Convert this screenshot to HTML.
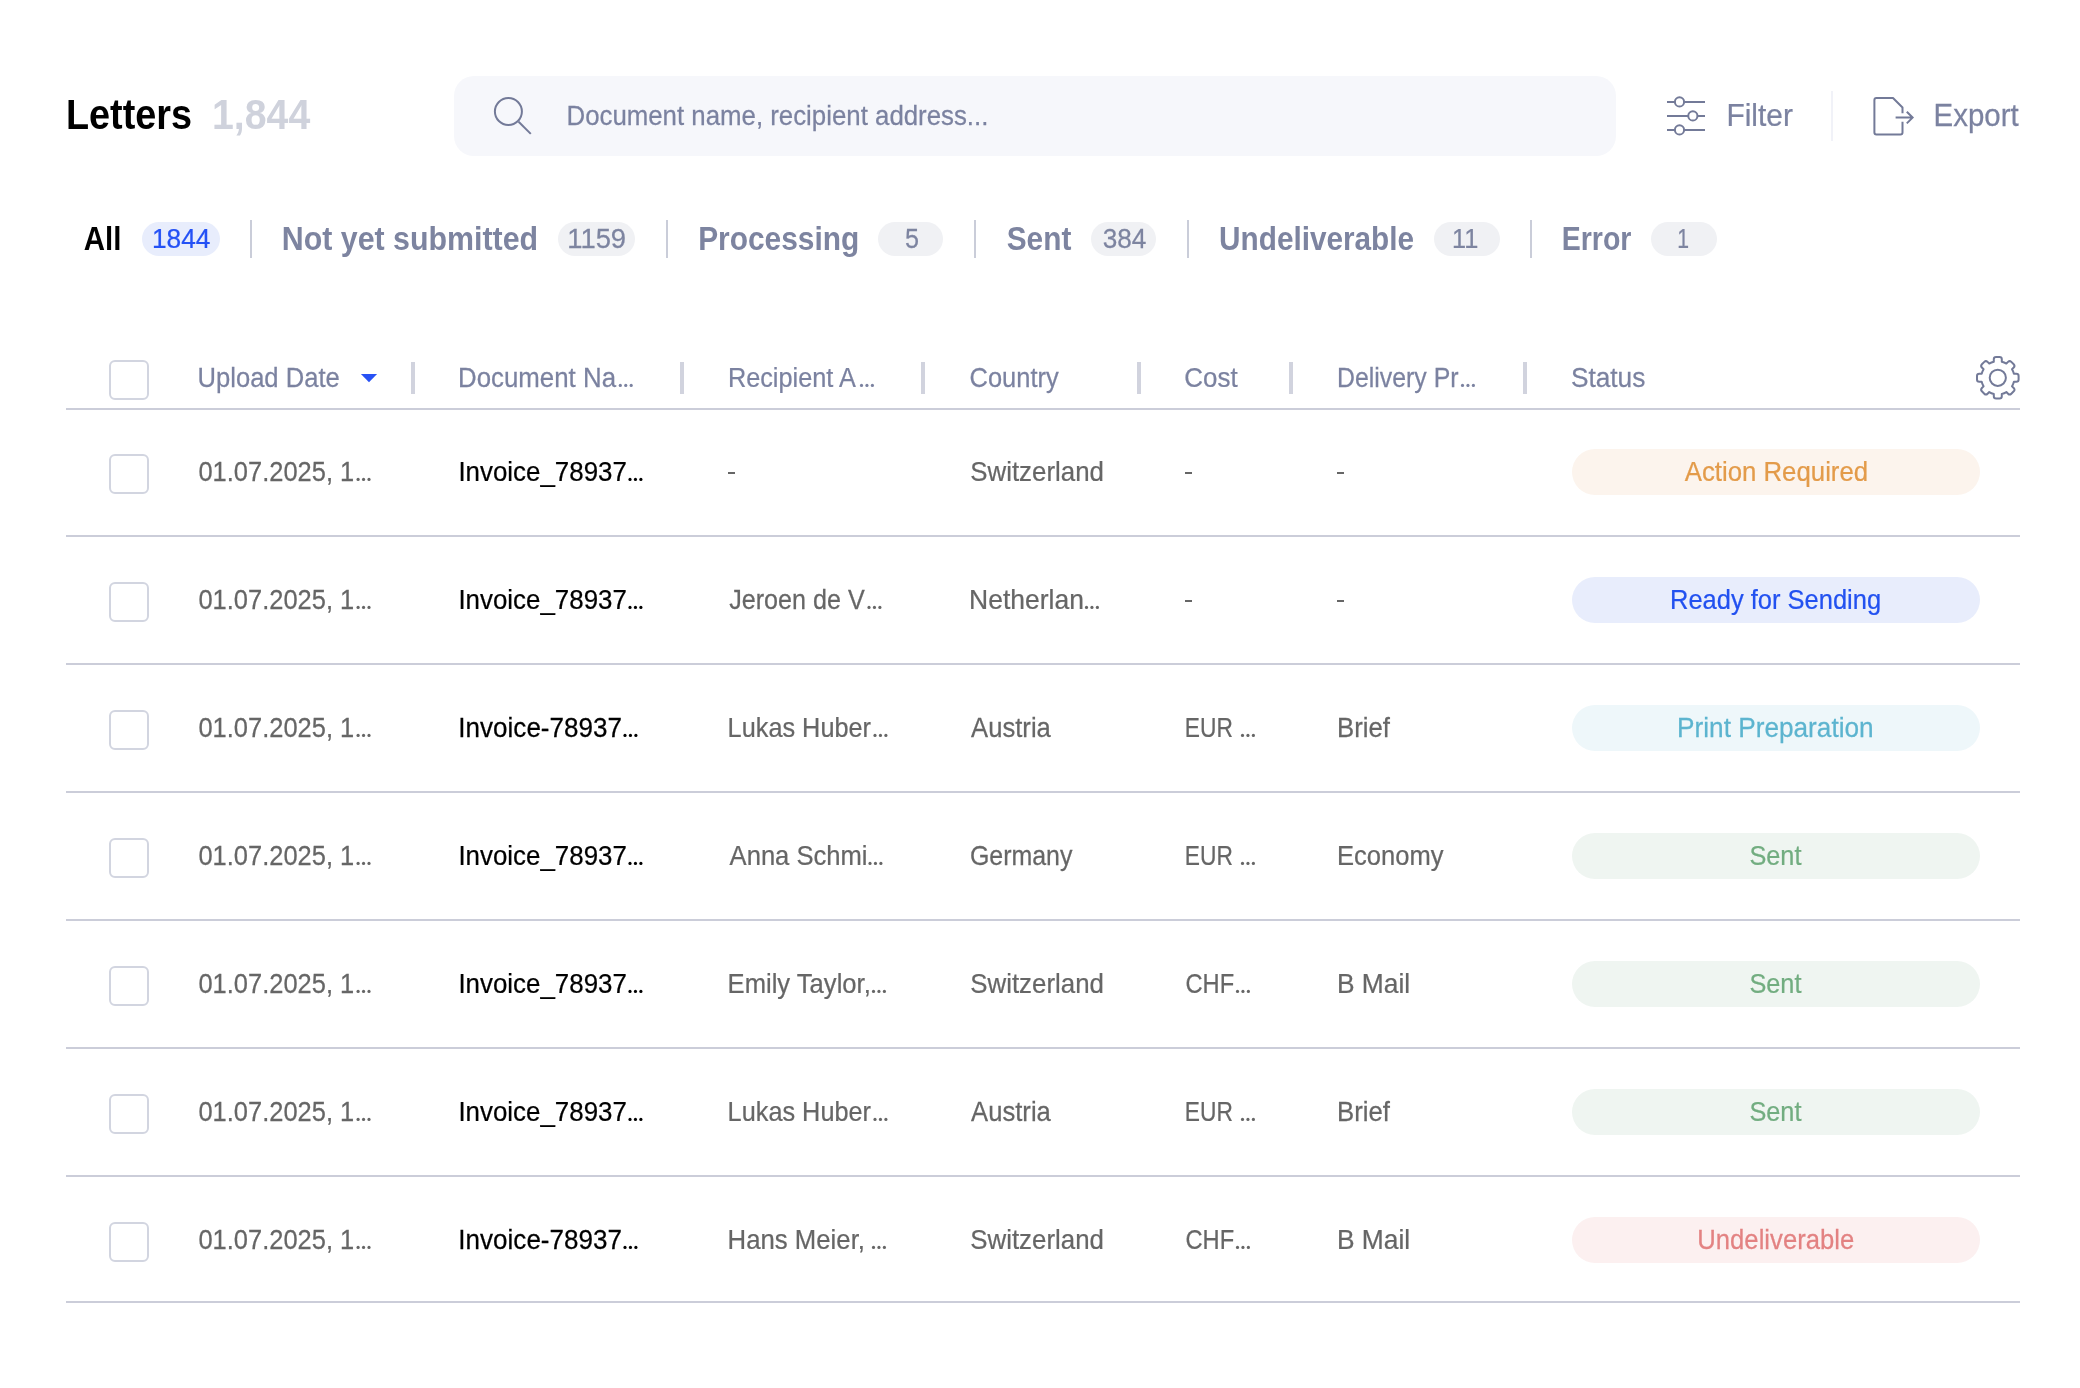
<!DOCTYPE html>
<html><head><meta charset="utf-8"><style>
html,body{margin:0;padding:0;background:#fff;width:2080px;height:1388px;overflow:hidden;position:relative}
.t{position:absolute;white-space:nowrap;font-family:"Liberation Sans",sans-serif;transform-origin:0 0}
.b{position:absolute}
.cb{position:absolute;width:36px;height:36px;border:2px solid #d2d5e0;border-radius:6px;background:#fff}
</style></head><body>
<div class="b" style="left:454px;top:76px;width:1162px;height:80px;border-radius:20px;background:#f6f7fb"></div>
<div class="b" style="left:1831px;top:91px;width:2px;height:50px;background:#f1f2f8"></div>
<div class="b" style="left:142px;top:222px;width:78.0px;height:34px;border-radius:17px;background:#e8edfc"></div>
<div class="b" style="left:558px;top:222px;width:77.4px;height:34px;border-radius:17px;background:#f0f1f4"></div>
<div class="b" style="left:878.2px;top:222px;width:65.3px;height:34px;border-radius:17px;background:#f0f1f4"></div>
<div class="b" style="left:1091.2px;top:222px;width:65.3px;height:34px;border-radius:17px;background:#f0f1f4"></div>
<div class="b" style="left:1434px;top:222px;width:66.0px;height:34px;border-radius:17px;background:#f0f1f4"></div>
<div class="b" style="left:1651px;top:222px;width:66.0px;height:34px;border-radius:17px;background:#f0f1f4"></div>
<div class="b" style="left:250px;top:220px;width:2px;height:38px;background:#cacdd9"></div>
<div class="b" style="left:666px;top:220px;width:2px;height:38px;background:#cacdd9"></div>
<div class="b" style="left:974px;top:220px;width:2px;height:38px;background:#cacdd9"></div>
<div class="b" style="left:1187px;top:220px;width:2px;height:38px;background:#cacdd9"></div>
<div class="b" style="left:1530px;top:220px;width:2px;height:38px;background:#cacdd9"></div>
<div class="b" style="left:411px;top:362px;width:4px;height:32px;background:#d1d3de"></div>
<div class="b" style="left:680px;top:362px;width:4px;height:32px;background:#d1d3de"></div>
<div class="b" style="left:921px;top:362px;width:4px;height:32px;background:#d1d3de"></div>
<div class="b" style="left:1137px;top:362px;width:4px;height:32px;background:#d1d3de"></div>
<div class="b" style="left:1289px;top:362px;width:4px;height:32px;background:#d1d3de"></div>
<div class="b" style="left:1523px;top:362px;width:4px;height:32px;background:#d1d3de"></div>
<div class="cb" style="left:109px;top:360px"></div>
<div class="b" style="left:66px;top:408px;width:1954px;height:2px;background:#cbcdd9"></div>
<svg class="b" style="left:0;top:0" width="2080" height="1388" viewBox="0 0 2080 1388"><path d="M360.9 374 L377.1 374 L369 382.3 Z" fill="#2852f5"/></svg>
<div class="b" style="left:728px;top:472px;width:7px;height:2px;background:#666"></div>
<div class="b" style="left:1185px;top:472px;width:7px;height:2px;background:#666"></div>
<div class="b" style="left:1337px;top:472px;width:7px;height:2px;background:#666"></div>
<div class="cb" style="left:109px;top:454px"></div>
<div class="b" style="left:66px;top:535px;width:1954px;height:2px;background:#cbcdd9"></div>
<div class="b" style="left:1572px;top:449px;width:408px;height:46px;border-radius:23px;background:#fcf4ed"></div>
<div class="b" style="left:1185px;top:600px;width:7px;height:2px;background:#666"></div>
<div class="b" style="left:1337px;top:600px;width:7px;height:2px;background:#666"></div>
<div class="cb" style="left:109px;top:582px"></div>
<div class="b" style="left:66px;top:663px;width:1954px;height:2px;background:#cbcdd9"></div>
<div class="b" style="left:1572px;top:577px;width:408px;height:46px;border-radius:23px;background:#e8edfc"></div>
<div class="cb" style="left:109px;top:710px"></div>
<div class="b" style="left:66px;top:791px;width:1954px;height:2px;background:#cbcdd9"></div>
<div class="b" style="left:1572px;top:705px;width:408px;height:46px;border-radius:23px;background:#eef7fa"></div>
<div class="cb" style="left:109px;top:838px"></div>
<div class="b" style="left:66px;top:919px;width:1954px;height:2px;background:#cbcdd9"></div>
<div class="b" style="left:1572px;top:833px;width:408px;height:46px;border-radius:23px;background:#eff5f1"></div>
<div class="cb" style="left:109px;top:966px"></div>
<div class="b" style="left:66px;top:1047px;width:1954px;height:2px;background:#cbcdd9"></div>
<div class="b" style="left:1572px;top:961px;width:408px;height:46px;border-radius:23px;background:#eff5f1"></div>
<div class="cb" style="left:109px;top:1094px"></div>
<div class="b" style="left:66px;top:1175px;width:1954px;height:2px;background:#cbcdd9"></div>
<div class="b" style="left:1572px;top:1089px;width:408px;height:46px;border-radius:23px;background:#eff5f1"></div>
<div class="cb" style="left:109px;top:1222px"></div>
<div class="b" style="left:66px;top:1301px;width:1954px;height:2px;background:#cbcdd9"></div>
<div class="b" style="left:1572px;top:1217px;width:408px;height:46px;border-radius:23px;background:#fcf0f0"></div>
<svg class="b" style="left:0;top:0" width="2080" height="1388" viewBox="0 0 2080 1388" fill="none" stroke="#737a98" stroke-width="2">
<circle cx="508.4" cy="111.5" r="13.5"/>
<path d="M518.6 121.7 L530.8 133.9" stroke-linecap="butt"/>
<path d="M1667 101.9 H1705 M1667 115.9 H1705 M1667 129.9 H1705"/>
<circle cx="1679.5" cy="101.9" r="4.6" fill="#fff"/>
<circle cx="1692.85" cy="115.9" r="4.6" fill="#fff"/>
<circle cx="1679.5" cy="129.9" r="4.6" fill="#fff"/>
<path d="M1902.5 113.3 V107.5 L1893 98 H1876.4 Q1874.4 98 1874.4 100 V132.5 Q1874.4 134.5 1876.4 134.5 H1900.5 Q1902.5 134.5 1902.5 132.5 V121.8" stroke-linejoin="round"/>
<path d="M1895.6 117.6 H1912.2 M1906.8 111.8 L1912.6 117.6 L1906.8 123.4"/>
<path d="M1993.80 361.69 L1993.80 359.30 Q1993.80 357.00 1996.10 357.00 L1999.50 357.00 Q2001.80 357.00 2001.80 359.30 L2001.80 361.69 A16.60 16.60 0 0 1 2006.36 363.58 L2008.05 361.89 Q2009.68 360.26 2011.31 361.89 L2013.71 364.29 Q2015.34 365.92 2013.71 367.55 L2012.02 369.24 A16.60 16.60 0 0 1 2013.91 373.80 L2016.30 373.80 Q2018.60 373.80 2018.60 376.10 L2018.60 379.50 Q2018.60 381.80 2016.30 381.80 L2013.91 381.80 A16.60 16.60 0 0 1 2012.02 386.36 L2013.71 388.05 Q2015.34 389.68 2013.71 391.31 L2011.31 393.71 Q2009.68 395.34 2008.05 393.71 L2006.36 392.02 A16.60 16.60 0 0 1 2001.80 393.91 L2001.80 396.30 Q2001.80 398.60 1999.50 398.60 L1996.10 398.60 Q1993.80 398.60 1993.80 396.30 L1993.80 393.91 A16.60 16.60 0 0 1 1989.24 392.02 L1987.55 393.71 Q1985.92 395.34 1984.29 393.71 L1981.89 391.31 Q1980.26 389.68 1981.89 388.05 L1983.58 386.36 A16.60 16.60 0 0 1 1981.69 381.80 L1979.30 381.80 Q1977.00 381.80 1977.00 379.50 L1977.00 376.10 Q1977.00 373.80 1979.30 373.80 L1981.69 373.80 A16.60 16.60 0 0 1 1983.58 369.24 L1981.89 367.55 Q1980.26 365.92 1981.89 364.29 L1984.29 361.89 Q1985.92 360.26 1987.55 361.89 L1989.24 363.58 A16.60 16.60 0 0 1 1993.80 361.69 Z" stroke-linejoin="round"/>
<circle cx="1997.8" cy="377.8" r="8.1"/>
</svg>
<svg class="b" style="left:0;top:0;will-change:transform" width="2080" height="1388" viewBox="0 0 2080 1388" font-family="Liberation Sans" xml:space="preserve">
<text transform="translate(66.04 129) scale(0.8964 1)" font-size="42.15" font-weight="700" fill="#000000">Letters</text>
<text transform="translate(212.05 129) scale(0.9310 1)" font-size="42.15" font-weight="700" fill="#cfd2dc">1,844</text>
<text transform="translate(566.48 125) scale(0.9257 1)" font-size="27.91" font-weight="400" fill="#7b82a0" stroke="#7b82a0" stroke-width="0.25">Document name, recipient address...</text>
<text transform="translate(1726.41 126) scale(0.9399 1)" font-size="31.83" font-weight="400" fill="#7b82a0" stroke="#7b82a0" stroke-width="0.25">Filter</text>
<text transform="translate(1933.6 126) scale(0.9261 1)" font-size="31.83" font-weight="400" fill="#7b82a0" stroke="#7b82a0" stroke-width="0.25">Export</text>
<text transform="translate(83.84 250) scale(0.8725 1)" font-size="33.72" font-weight="700" fill="#000000">All</text>
<text transform="translate(151.96 248) scale(0.9472 1)" font-size="27.76" font-weight="400" fill="#2451f5" stroke="#2451f5" stroke-width="0.25">1844</text>
<text transform="translate(281.8 250) scale(0.9002 1)" font-size="33.72" font-weight="700" fill="#7d84a0">Not yet submitted</text>
<text transform="translate(567.19 248) scale(0.9870 1)" font-size="27.76" font-weight="400" fill="#7d84a0" stroke="#7d84a0" stroke-width="0.25">1159</text>
<text transform="translate(698.13 250) scale(0.8866 1)" font-size="33.72" font-weight="700" fill="#7d84a0">Processing</text>
<text transform="translate(905.11 248) scale(0.9072 1)" font-size="27.76" font-weight="400" fill="#7d84a0" stroke="#7d84a0" stroke-width="0.25">5</text>
<text transform="translate(1006.73 250) scale(0.8842 1)" font-size="33.72" font-weight="700" fill="#7d84a0">Sent</text>
<text transform="translate(1102.68 248) scale(0.9428 1)" font-size="27.76" font-weight="400" fill="#7d84a0" stroke="#7d84a0" stroke-width="0.25">384</text>
<text transform="translate(1219.11 250) scale(0.8819 1)" font-size="33.72" font-weight="700" fill="#7d84a0">Undeliverable</text>
<text transform="translate(1452.12 248) scale(0.9130 1)" font-size="27.76" font-weight="400" fill="#7d84a0" stroke="#7d84a0" stroke-width="0.25">11</text>
<text transform="translate(1561.72 250) scale(0.8451 1)" font-size="33.72" font-weight="700" fill="#7d84a0">Error</text>
<text transform="translate(1677.28 248) scale(0.7631 1)" font-size="27.76" font-weight="400" fill="#7d84a0" stroke="#7d84a0" stroke-width="0.25">1</text>
<text transform="translate(197.5 387) scale(0.9127 1)" font-size="28.05" font-weight="400" fill="#7b82a0" stroke="#7b82a0" stroke-width="0.25">Upload Date</text>
<text transform="translate(457.98 387) scale(0.9216 1)" font-size="28.05" font-weight="400" fill="#7b82a0" stroke="#7b82a0" stroke-width="0.25">Document Na</text>
<text transform="translate(727.92 387) scale(0.9017 1)" font-size="28.05" font-weight="400" fill="#7b82a0" stroke="#7b82a0" stroke-width="0.25">Recipient A</text>
<text transform="translate(969.61 387) scale(0.9070 1)" font-size="28.05" font-weight="400" fill="#7b82a0" stroke="#7b82a0" stroke-width="0.25">Country</text>
<text transform="translate(1184.28 387) scale(0.9245 1)" font-size="28.05" font-weight="400" fill="#7b82a0" stroke="#7b82a0" stroke-width="0.25">Cost</text>
<text transform="translate(1336.96 387) scale(0.8862 1)" font-size="28.05" font-weight="400" fill="#7b82a0" stroke="#7b82a0" stroke-width="0.25">Delivery Pr</text>
<text transform="translate(1570.88 387) scale(0.9373 1)" font-size="28.05" font-weight="400" fill="#7b82a0" stroke="#7b82a0" stroke-width="0.25">Status</text>
<text transform="translate(198.4 481) scale(0.9129 1)" font-size="27.91" font-weight="400" fill="#666666" stroke="#666666" stroke-width="0.25">01.07.2025, 1</text>
<text transform="translate(458.38 481) scale(0.9285 1)" font-size="27.91" font-weight="400" fill="#000000" stroke="#000000" stroke-width="0.25">Invoice_78937</text>
<text transform="translate(970.29 481) scale(0.9266 1)" font-size="27.91" font-weight="400" fill="#666666" stroke="#666666" stroke-width="0.25">Switzerland</text>
<text transform="translate(1684.7 481) scale(0.9055 1)" font-size="28.49" font-weight="400" fill="#e39b4a" stroke="#e39b4a" stroke-width="0.25">Action Required</text>
<text transform="translate(198.4 609) scale(0.9129 1)" font-size="27.91" font-weight="400" fill="#666666" stroke="#666666" stroke-width="0.25">01.07.2025, 1</text>
<text transform="translate(458.38 609) scale(0.9285 1)" font-size="27.91" font-weight="400" fill="#000000" stroke="#000000" stroke-width="0.25">Invoice_78937</text>
<text transform="translate(729.21 609) scale(0.9008 1)" font-size="27.91" font-weight="400" fill="#666666" stroke="#666666" stroke-width="0.25">Jeroen de V</text>
<text transform="translate(969.03 609) scale(0.9492 1)" font-size="27.91" font-weight="400" fill="#666666" stroke="#666666" stroke-width="0.25">Netherlan</text>
<text transform="translate(1670.01 609) scale(0.8951 1)" font-size="28.49" font-weight="400" fill="#2251f0" stroke="#2251f0" stroke-width="0.25">Ready for Sending</text>
<text transform="translate(198.4 737) scale(0.9129 1)" font-size="27.91" font-weight="400" fill="#666666" stroke="#666666" stroke-width="0.25">01.07.2025, 1</text>
<text transform="translate(458.37 737) scale(0.9331 1)" font-size="27.91" font-weight="400" fill="#000000" stroke="#000000" stroke-width="0.25">Invoice-78937</text>
<text transform="translate(727.62 737) scale(0.9063 1)" font-size="27.91" font-weight="400" fill="#666666" stroke="#666666" stroke-width="0.25">Lukas Huber</text>
<text transform="translate(971.1 737) scale(0.9180 1)" font-size="27.91" font-weight="400" fill="#666666" stroke="#666666" stroke-width="0.25">Austria</text>
<text transform="translate(1184.82 737) scale(0.8158 1)" font-size="27.91" font-weight="400" fill="#666666" stroke="#666666" stroke-width="0.25">EUR</text>
<text transform="translate(1336.99 737) scale(0.9223 1)" font-size="27.91" font-weight="400" fill="#666666" stroke="#666666" stroke-width="0.25">Brief</text>
<text transform="translate(1677.05 737) scale(0.9202 1)" font-size="28.49" font-weight="400" fill="#5cb4cf" stroke="#5cb4cf" stroke-width="0.25">Print Preparation</text>
<text transform="translate(198.4 865) scale(0.9129 1)" font-size="27.91" font-weight="400" fill="#666666" stroke="#666666" stroke-width="0.25">01.07.2025, 1</text>
<text transform="translate(458.38 865) scale(0.9285 1)" font-size="27.91" font-weight="400" fill="#000000" stroke="#000000" stroke-width="0.25">Invoice_78937</text>
<text transform="translate(729.6 865) scale(0.9171 1)" font-size="27.91" font-weight="400" fill="#666666" stroke="#666666" stroke-width="0.25">Anna Schmi</text>
<text transform="translate(969.93 865) scale(0.8937 1)" font-size="27.91" font-weight="400" fill="#666666" stroke="#666666" stroke-width="0.25">Germany</text>
<text transform="translate(1184.82 865) scale(0.8158 1)" font-size="27.91" font-weight="400" fill="#666666" stroke="#666666" stroke-width="0.25">EUR</text>
<text transform="translate(1337 865) scale(0.9155 1)" font-size="27.91" font-weight="400" fill="#666666" stroke="#666666" stroke-width="0.25">Economy</text>
<text transform="translate(1749.41 865) scale(0.8891 1)" font-size="28.49" font-weight="400" fill="#72ad80" stroke="#72ad80" stroke-width="0.25">Sent</text>
<text transform="translate(198.4 993) scale(0.9129 1)" font-size="27.91" font-weight="400" fill="#666666" stroke="#666666" stroke-width="0.25">01.07.2025, 1</text>
<text transform="translate(458.38 993) scale(0.9285 1)" font-size="27.91" font-weight="400" fill="#000000" stroke="#000000" stroke-width="0.25">Invoice_78937</text>
<text transform="translate(727.6 993) scale(0.9176 1)" font-size="27.91" font-weight="400" fill="#666666" stroke="#666666" stroke-width="0.25">Emily Taylor,</text>
<text transform="translate(970.29 993) scale(0.9266 1)" font-size="27.91" font-weight="400" fill="#666666" stroke="#666666" stroke-width="0.25">Switzerland</text>
<text transform="translate(1185.49 993) scale(0.8488 1)" font-size="27.91" font-weight="400" fill="#666666" stroke="#666666" stroke-width="0.25">CHF</text>
<text transform="translate(1336.94 993) scale(0.9454 1)" font-size="27.91" font-weight="400" fill="#666666" stroke="#666666" stroke-width="0.25">B Mail</text>
<text transform="translate(1749.41 993) scale(0.8891 1)" font-size="28.49" font-weight="400" fill="#72ad80" stroke="#72ad80" stroke-width="0.25">Sent</text>
<text transform="translate(198.4 1121) scale(0.9129 1)" font-size="27.91" font-weight="400" fill="#666666" stroke="#666666" stroke-width="0.25">01.07.2025, 1</text>
<text transform="translate(458.38 1121) scale(0.9285 1)" font-size="27.91" font-weight="400" fill="#000000" stroke="#000000" stroke-width="0.25">Invoice_78937</text>
<text transform="translate(727.62 1121) scale(0.9063 1)" font-size="27.91" font-weight="400" fill="#666666" stroke="#666666" stroke-width="0.25">Lukas Huber</text>
<text transform="translate(971.1 1121) scale(0.9180 1)" font-size="27.91" font-weight="400" fill="#666666" stroke="#666666" stroke-width="0.25">Austria</text>
<text transform="translate(1184.82 1121) scale(0.8158 1)" font-size="27.91" font-weight="400" fill="#666666" stroke="#666666" stroke-width="0.25">EUR</text>
<text transform="translate(1336.99 1121) scale(0.9223 1)" font-size="27.91" font-weight="400" fill="#666666" stroke="#666666" stroke-width="0.25">Brief</text>
<text transform="translate(1749.41 1121) scale(0.8891 1)" font-size="28.49" font-weight="400" fill="#72ad80" stroke="#72ad80" stroke-width="0.25">Sent</text>
<text transform="translate(198.4 1249) scale(0.9129 1)" font-size="27.91" font-weight="400" fill="#666666" stroke="#666666" stroke-width="0.25">01.07.2025, 1</text>
<text transform="translate(458.37 1249) scale(0.9331 1)" font-size="27.91" font-weight="400" fill="#000000" stroke="#000000" stroke-width="0.25">Invoice-78937</text>
<text transform="translate(727.59 1249) scale(0.9230 1)" font-size="27.91" font-weight="400" fill="#666666" stroke="#666666" stroke-width="0.25">Hans Meier,</text>
<text transform="translate(970.29 1249) scale(0.9266 1)" font-size="27.91" font-weight="400" fill="#666666" stroke="#666666" stroke-width="0.25">Switzerland</text>
<text transform="translate(1185.49 1249) scale(0.8488 1)" font-size="27.91" font-weight="400" fill="#666666" stroke="#666666" stroke-width="0.25">CHF</text>
<text transform="translate(1336.94 1249) scale(0.9454 1)" font-size="27.91" font-weight="400" fill="#666666" stroke="#666666" stroke-width="0.25">B Mail</text>
<text transform="translate(1697.3 1249) scale(0.9009 1)" font-size="28.49" font-weight="400" fill="#e38282" stroke="#e38282" stroke-width="0.25">Undeliverable</text>
<circle cx="620.30" cy="385.40" r="1.6" fill="#7b82a0"/>
<circle cx="625.75" cy="385.40" r="1.6" fill="#7b82a0"/>
<circle cx="631.20" cy="385.40" r="1.6" fill="#7b82a0"/>
<circle cx="861.50" cy="385.40" r="1.6" fill="#7b82a0"/>
<circle cx="866.95" cy="385.40" r="1.6" fill="#7b82a0"/>
<circle cx="872.40" cy="385.40" r="1.6" fill="#7b82a0"/>
<circle cx="1462.50" cy="385.40" r="1.6" fill="#7b82a0"/>
<circle cx="1467.95" cy="385.40" r="1.6" fill="#7b82a0"/>
<circle cx="1473.40" cy="385.40" r="1.6" fill="#7b82a0"/>
<circle cx="358.10" cy="479.40" r="1.6" fill="#666666"/>
<circle cx="363.55" cy="479.40" r="1.6" fill="#666666"/>
<circle cx="369.00" cy="479.40" r="1.6" fill="#666666"/>
<circle cx="630.00" cy="479.40" r="1.6" fill="#000000"/>
<circle cx="635.45" cy="479.40" r="1.6" fill="#000000"/>
<circle cx="640.90" cy="479.40" r="1.6" fill="#000000"/>
<circle cx="358.10" cy="607.40" r="1.6" fill="#666666"/>
<circle cx="363.55" cy="607.40" r="1.6" fill="#666666"/>
<circle cx="369.00" cy="607.40" r="1.6" fill="#666666"/>
<circle cx="630.00" cy="607.40" r="1.6" fill="#000000"/>
<circle cx="635.45" cy="607.40" r="1.6" fill="#000000"/>
<circle cx="640.90" cy="607.40" r="1.6" fill="#000000"/>
<circle cx="869.00" cy="607.40" r="1.6" fill="#666666"/>
<circle cx="874.45" cy="607.40" r="1.6" fill="#666666"/>
<circle cx="879.90" cy="607.40" r="1.6" fill="#666666"/>
<circle cx="1086.50" cy="607.40" r="1.6" fill="#666666"/>
<circle cx="1091.95" cy="607.40" r="1.6" fill="#666666"/>
<circle cx="1097.40" cy="607.40" r="1.6" fill="#666666"/>
<circle cx="358.10" cy="735.40" r="1.6" fill="#666666"/>
<circle cx="363.55" cy="735.40" r="1.6" fill="#666666"/>
<circle cx="369.00" cy="735.40" r="1.6" fill="#666666"/>
<circle cx="625.00" cy="735.40" r="1.6" fill="#000000"/>
<circle cx="630.45" cy="735.40" r="1.6" fill="#000000"/>
<circle cx="635.90" cy="735.40" r="1.6" fill="#000000"/>
<circle cx="875.00" cy="735.40" r="1.6" fill="#666666"/>
<circle cx="880.45" cy="735.40" r="1.6" fill="#666666"/>
<circle cx="885.90" cy="735.40" r="1.6" fill="#666666"/>
<circle cx="1242.50" cy="735.40" r="1.6" fill="#666666"/>
<circle cx="1247.95" cy="735.40" r="1.6" fill="#666666"/>
<circle cx="1253.40" cy="735.40" r="1.6" fill="#666666"/>
<circle cx="358.10" cy="863.40" r="1.6" fill="#666666"/>
<circle cx="363.55" cy="863.40" r="1.6" fill="#666666"/>
<circle cx="369.00" cy="863.40" r="1.6" fill="#666666"/>
<circle cx="630.00" cy="863.40" r="1.6" fill="#000000"/>
<circle cx="635.45" cy="863.40" r="1.6" fill="#000000"/>
<circle cx="640.90" cy="863.40" r="1.6" fill="#000000"/>
<circle cx="870.00" cy="863.40" r="1.6" fill="#666666"/>
<circle cx="875.45" cy="863.40" r="1.6" fill="#666666"/>
<circle cx="880.90" cy="863.40" r="1.6" fill="#666666"/>
<circle cx="1242.50" cy="863.40" r="1.6" fill="#666666"/>
<circle cx="1247.95" cy="863.40" r="1.6" fill="#666666"/>
<circle cx="1253.40" cy="863.40" r="1.6" fill="#666666"/>
<circle cx="358.10" cy="991.40" r="1.6" fill="#666666"/>
<circle cx="363.55" cy="991.40" r="1.6" fill="#666666"/>
<circle cx="369.00" cy="991.40" r="1.6" fill="#666666"/>
<circle cx="630.00" cy="991.40" r="1.6" fill="#000000"/>
<circle cx="635.45" cy="991.40" r="1.6" fill="#000000"/>
<circle cx="640.90" cy="991.40" r="1.6" fill="#000000"/>
<circle cx="873.50" cy="991.40" r="1.6" fill="#666666"/>
<circle cx="878.95" cy="991.40" r="1.6" fill="#666666"/>
<circle cx="884.40" cy="991.40" r="1.6" fill="#666666"/>
<circle cx="1237.50" cy="991.40" r="1.6" fill="#666666"/>
<circle cx="1242.95" cy="991.40" r="1.6" fill="#666666"/>
<circle cx="1248.40" cy="991.40" r="1.6" fill="#666666"/>
<circle cx="358.10" cy="1119.40" r="1.6" fill="#666666"/>
<circle cx="363.55" cy="1119.40" r="1.6" fill="#666666"/>
<circle cx="369.00" cy="1119.40" r="1.6" fill="#666666"/>
<circle cx="630.00" cy="1119.40" r="1.6" fill="#000000"/>
<circle cx="635.45" cy="1119.40" r="1.6" fill="#000000"/>
<circle cx="640.90" cy="1119.40" r="1.6" fill="#000000"/>
<circle cx="875.00" cy="1119.40" r="1.6" fill="#666666"/>
<circle cx="880.45" cy="1119.40" r="1.6" fill="#666666"/>
<circle cx="885.90" cy="1119.40" r="1.6" fill="#666666"/>
<circle cx="1242.50" cy="1119.40" r="1.6" fill="#666666"/>
<circle cx="1247.95" cy="1119.40" r="1.6" fill="#666666"/>
<circle cx="1253.40" cy="1119.40" r="1.6" fill="#666666"/>
<circle cx="358.10" cy="1247.40" r="1.6" fill="#666666"/>
<circle cx="363.55" cy="1247.40" r="1.6" fill="#666666"/>
<circle cx="369.00" cy="1247.40" r="1.6" fill="#666666"/>
<circle cx="625.00" cy="1247.40" r="1.6" fill="#000000"/>
<circle cx="630.45" cy="1247.40" r="1.6" fill="#000000"/>
<circle cx="635.90" cy="1247.40" r="1.6" fill="#000000"/>
<circle cx="873.50" cy="1247.40" r="1.6" fill="#666666"/>
<circle cx="878.95" cy="1247.40" r="1.6" fill="#666666"/>
<circle cx="884.40" cy="1247.40" r="1.6" fill="#666666"/>
<circle cx="1237.50" cy="1247.40" r="1.6" fill="#666666"/>
<circle cx="1242.95" cy="1247.40" r="1.6" fill="#666666"/>
<circle cx="1248.40" cy="1247.40" r="1.6" fill="#666666"/>
</svg>
</body></html>
